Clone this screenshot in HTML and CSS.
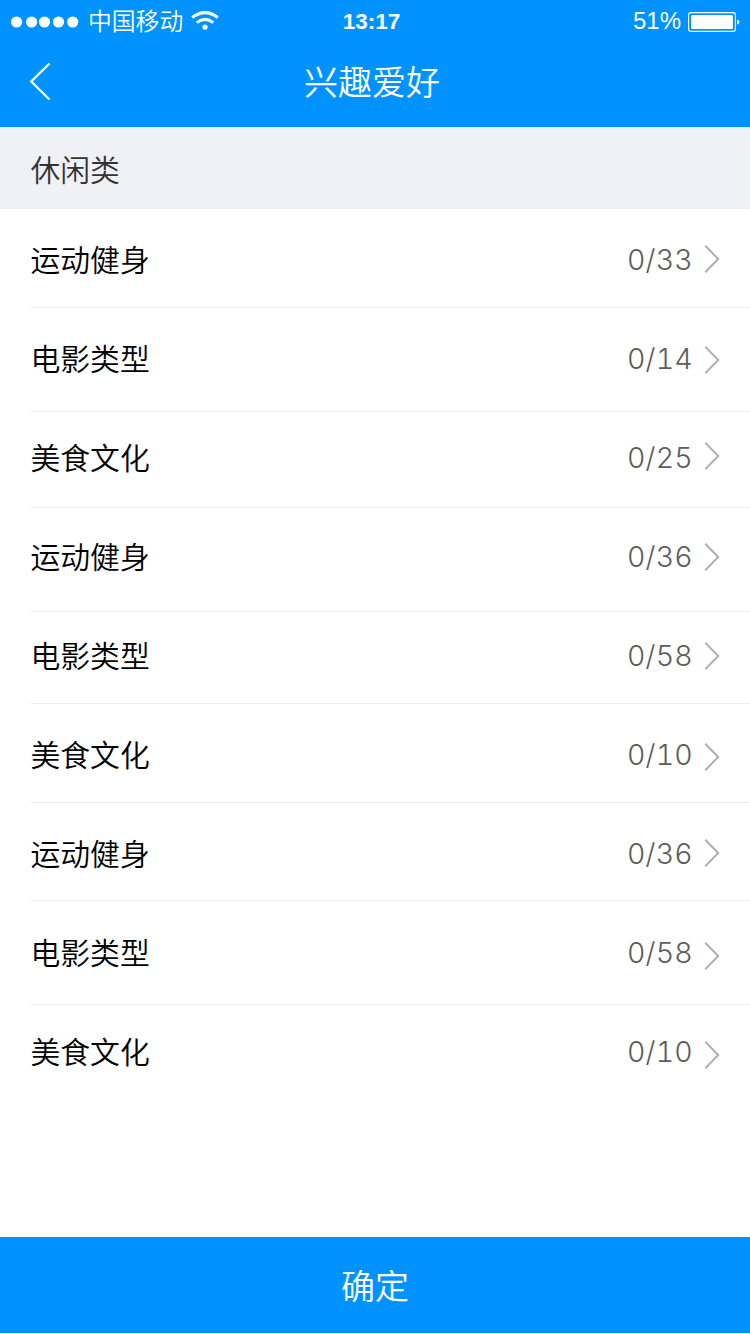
FILE: index.html
```html
<!DOCTYPE html>
<html lang="zh-CN">
<head>
<meta charset="utf-8">
<title>兴趣爱好</title>
<link rel="stylesheet" href="styles.css">
</head>
<body>
<svg class="defs" width="0" height="0" aria-hidden="true">
  <symbol id="chevron" viewBox="0 0 16 30"><path d="M1.3 1.8 14.2 15 1.3 28.2" fill="none" stroke="#b0b0b0" stroke-width="2"/></symbol>
</svg>
<header class="header">
  <div class="status">
    <div class="carrier">
      <svg width="68" height="12" viewBox="0 0 68 12" fill="#fff"><circle cx="5.6" cy="6" r="5.6"/><circle cx="20.6" cy="6" r="5.6"/><circle cx="33.5" cy="6" r="5.6"/><circle cx="47.5" cy="6" r="5.6"/><circle cx="61.7" cy="6" r="5.6"/></svg>
      <span class="carrier-name">中国移动</span>
      <svg class="wifi" width="28" height="20" viewBox="0 0 28 20" fill="none" stroke="#fff" stroke-width="3"><path d="M1.2 6.5Q14 -3.3 26.8 6.5"/><path d="M5.7 11.7Q14 5.1 22.3 11.7"/><circle cx="14" cy="16.1" r="2.6" fill="#fff" stroke="none"/></svg>
    </div>
    <span class="time">13:17</span>
    <div class="power">
      <span class="percent">51%</span>
      <svg width="52" height="20" viewBox="0 0 52 20"><rect x=".6" y=".6" width="46.8" height="18.8" rx="2.5" fill="none" stroke="#fff" stroke-width="1.1"/><rect x="3" y="3" width="42" height="14" rx="1.5" fill="#fff"/><path d="M49 7.5q2.5.5 2.5 2.5t-2.5 2.5z" fill="#fff"/></svg>
    </div>
  </div>
  <div class="nav">
    <svg class="back" width="22" height="40" viewBox="0 0 22 40"><path d="M20.5 1.5 2.2 19.5 20.5 37.5" fill="none" stroke="#fff" stroke-width="2.3"/></svg>
    <h1 class="title">兴趣爱好</h1>
  </div>
</header>
<h2 class="section">休闲类</h2>
<ul class="list">
  <li class="row"><span class="label">运动健身</span><span class="count">0/33</span><svg class="arrow"><use href="#chevron"/></svg></li>
  <li class="row"><span class="label">电影类型</span><span class="count">0/14</span><svg class="arrow"><use href="#chevron"/></svg></li>
  <li class="row"><span class="label">美食文化</span><span class="count">0/25</span><svg class="arrow"><use href="#chevron"/></svg></li>
  <li class="row"><span class="label">运动健身</span><span class="count">0/36</span><svg class="arrow"><use href="#chevron"/></svg></li>
  <li class="row"><span class="label">电影类型</span><span class="count">0/58</span><svg class="arrow"><use href="#chevron"/></svg></li>
  <li class="row"><span class="label">美食文化</span><span class="count">0/10</span><svg class="arrow"><use href="#chevron"/></svg></li>
  <li class="row"><span class="label">运动健身</span><span class="count">0/36</span><svg class="arrow"><use href="#chevron"/></svg></li>
  <li class="row"><span class="label">电影类型</span><span class="count">0/58</span><svg class="arrow"><use href="#chevron"/></svg></li>
  <li class="row"><span class="label">美食文化</span><span class="count">0/10</span><svg class="arrow"><use href="#chevron"/></svg></li>
</ul>
<button class="confirm">确定</button>
</body>
</html>
```
FILE: styles.css
```css
* { box-sizing: border-box; margin: 0; padding: 0; }
body {
  display: flex;
  flex-direction: column;
  width: 750px;
  height: 1334px;
  padding-bottom: 1px;
  overflow: hidden;
  background: #fff;
  font-family: "Noto Sans CJK SC", sans-serif;
  font-weight: 350;
}
svg { display: block; flex: none; }
.defs { position: absolute; }
.header { flex: none; height: 127px; background: #0093ff; color: #fff; }
.status {
  display: grid;
  grid-template-columns: 1fr auto 1fr;
  align-items: center;
  height: 43px;
  padding: 0 10px 0 11px;
}
.carrier { display: flex; align-items: center; }
.carrier-name { margin-left: 9px; padding-bottom: 4px; font-size: 23.8px; line-height: 36px; }
.wifi { margin: 0 0 2px 8px; }
.time { margin-right: 8px; font: bold 22.5px/42px "Liberation Sans", sans-serif; }
.power { display: flex; align-items: center; justify-content: flex-end; gap: 7px; }
.percent { padding-bottom: 1px; font: 24px/42px "Liberation Sans", sans-serif; }
.nav { display: grid; grid-template-columns: 60px 1fr 66px; align-items: center; height: 77px; }
.back { margin-left: 29px; }
.title { padding-bottom: 2px; font-size: 34px; font-weight: 350; line-height: 50px; text-align: center; }
.section {
  flex: none;
  height: 82px;
  padding: 20px 30.5px 0;
  background: #eff1f6;
  color: #333;
  font-size: 29.8px;
  font-weight: 350;
  line-height: 42px;
}
.list { flex: 1; padding-left: 31px; list-style: none; }
.row {
  display: flex;
  align-items: flex-start;
  height: 99px;
  padding: 28px 30px 0 0;
  border-bottom: 1px solid #ebebeb;
}
.label { flex: 1; margin-left: -0.5px; color: #000; font-size: 29.8px; line-height: 42px; }
.count {
  color: #5c5c5c;
  font: 300 28.5px/46px Inter, "Liberation Sans", sans-serif;
  font-feature-settings: "tnum";
  letter-spacing: 0.2px;
}
.arrow { width: 16px; height: 30px; margin: 7px 0 0 11px; }
.row:nth-child(2) { height: 104px; }
.row:nth-child(3) { height: 96px; padding-top: 23px; }
.row:nth-child(4) { height: 104px; padding-top: 26px; }
.row:nth-child(5) { height: 92px; padding-top: 21px; }
.row:nth-child(7) { height: 98px; }
.row:nth-child(8) { height: 104px; padding-top: 29px; }
.row:nth-child(9) { padding-top: 24px; border-bottom: 0; }
.row:nth-child(2) .arrow { margin-top: 9px; }
.row:nth-child(3) .arrow { margin-top: 6px; }
.row:nth-child(4) .arrow, .row:nth-child(5) .arrow { margin-top: 8px; }
.row:nth-child(6) .arrow { margin-top: 10px; }
.row:nth-child(8) .arrow, .row:nth-child(9) .arrow { margin-top: 11px; }
.confirm {
  flex: none;
  height: 96px;
  border: 0;
  background: #0093ff;
  color: #fff;
  font: 350 34px/50px "Noto Sans CJK SC", sans-serif;
}
```
